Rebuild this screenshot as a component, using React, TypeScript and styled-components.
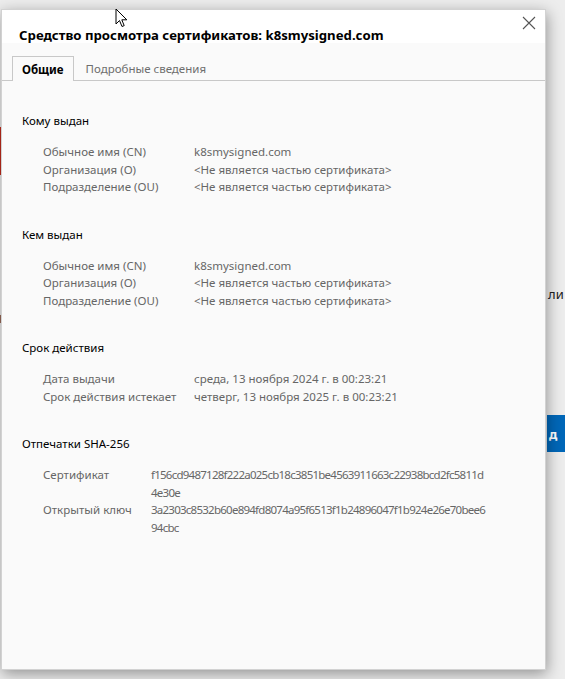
import React from "react";
import styled, { createGlobalStyle } from "styled-components";

const Global = createGlobalStyle`
  html, body { margin: 0; padding: 0; }
  body { background: #ececec; font-family: "Noto Sans", "Open Sans", sans-serif; }
`;

const Page = styled.div`
  position: relative;
  width: 565px;
  height: 679px;
  overflow: hidden;
  background: #ededed;
  padding: 9px 0 0 1px;
  box-sizing: border-box;
`;

const Dialog = styled.div`
  position: relative;
  width: 545px;
  height: 661px;
  box-sizing: border-box;
  border: 1px solid #d2d2d2;
  background: #fafafa;
  box-shadow: 1px 4px 14px rgba(0, 0, 0, 0.38);
  display: flex;
  flex-direction: column;
`;

const TitleBar = styled.div`
  background: #ffffff;
  height: 33px;
  padding: 16px 0 0 17px;
  box-sizing: border-box;
  font-size: 13.2px;
  font-weight: 700;
  color: #000;
`;

const CloseButton = styled.button`
  position: absolute;
  top: 0;
  right: 3px;
  width: 26px;
  height: 26px;
  border: none;
  background: transparent;
  padding: 0;
  display: flex;
  align-items: center;
  justify-content: center;
`;

const Tabs = styled.div`
  display: flex;
  align-items: flex-end;
  margin-top: 13px;
  padding-left: 10px;
  border-bottom: 1px solid #c8c8c8;
  height: 24px;
`;

const Tab = styled.div<{ $active?: boolean }>`
  box-sizing: border-box;
  padding: 0 ${(p) => (p.$active ? "9px" : "10px")} 0 ${(p) => (p.$active ? "9px" : "11px")};
  display: flex;
  align-items: center;
  font-size: 11.5px;
  font-weight: ${(p) => (p.$active ? 700 : 400)};
  color: ${(p) => (p.$active ? "#000" : "#6e6e6e")};
  border: 1px solid ${(p) => (p.$active ? "#c8c8c8" : "transparent")};
  border-bottom: none;
  background: #fafafa;
  margin-bottom: ${(p) => (p.$active ? "-1px" : "0")};
  height: ${(p) => (p.$active ? "25px" : "24px")};
`;

const Content = styled.div`
  padding: 31px 0 0 20px;
  display: flex;
  flex-direction: column;
  gap: 30px;
`;

const Section = styled.section`
  display: flex;
  flex-direction: column;
`;

const SectionTitle = styled.div`
  font-size: 11.5px;
  color: #000;
  line-height: 18px;
  margin-bottom: 13px;
`;

const Rows = styled.div<{ $labelWidth: number }>`
  display: grid;
  grid-template-columns: ${(p) => p.$labelWidth}px 335px;
  padding-left: 21px;
  font-size: 11.5px;
  line-height: 17.5px;
`;

const Label = styled.div`
  color: #666666;
  white-space: nowrap;
`;

const Value = styled.div<{ $hash?: boolean }>`
  color: #666666;
  word-break: break-all;
  letter-spacing: ${(p) => (p.$hash ? "-0.75px" : "0")};
`;

const BackdropText = styled.div`
  position: absolute;
  left: 548px;
  top: 285px;
  font-size: 13px;
  color: #222;
`;

const BackdropButton = styled.div`
  position: absolute;
  left: 547px;
  top: 415px;
  width: 30px;
  height: 37px;
  background: #0067b8;
  color: #fff;
  font-size: 13px;
  font-weight: 700;
  display: flex;
  align-items: center;
  padding-left: 2px;
  box-sizing: border-box;
`;

const EdgeMark = styled.div<{ $top: number; $h: number; $c: string }>`
  position: absolute;
  left: 0;
  top: ${(p) => p.$top}px;
  width: 1px;
  height: ${(p) => p.$h}px;
  background: ${(p) => p.$c};
`;

const Cursor = styled.svg`
  position: absolute;
  left: 115px;
  top: 8px;
`;

type Row = { label: string; value: string };

const sections: { title: string; labelWidth: number; hash?: boolean; rows: Row[] }[] = [
  {
    title: "Кому выдан",
    labelWidth: 151,
    rows: [
      { label: "Обычное имя (CN)", value: "k8smysigned.com" },
      { label: "Организация (O)", value: "<Не является частью сертификата>" },
      { label: "Подразделение (OU)", value: "<Не является частью сертификата>" },
    ],
  },
  {
    title: "Кем выдан",
    labelWidth: 151,
    rows: [
      { label: "Обычное имя (CN)", value: "k8smysigned.com" },
      { label: "Организация (O)", value: "<Не является частью сертификата>" },
      { label: "Подразделение (OU)", value: "<Не является частью сертификата>" },
    ],
  },
  {
    title: "Срок действия",
    labelWidth: 151,
    rows: [
      { label: "Дата выдачи", value: "среда, 13 ноября 2024 г. в 00:23:21" },
      { label: "Срок действия истекает", value: "четверг, 13 ноября 2025 г. в 00:23:21" },
    ],
  },
  {
    title: "Отпечатки SHA-256",
    labelWidth: 108,
    hash: true,
    rows: [
      {
        label: "Сертификат",
        value: "f156cd9487128f222a025cb18c3851be4563911663c22938bcd2fc5811d4e30e",
      },
      {
        label: "Открытый ключ",
        value: "3a2303c8532b60e894fd8074a95f6513f1b24896047f1b924e26e70bee694cbc",
      },
    ],
  },
];

export default function App() {
  return (
    <>
      <Global />
      <Page>
        <EdgeMark $top={127} $h={48} $c="#c42b1c" />
        <EdgeMark $top={315} $h={8} $c="#9a6b5a" />
        <BackdropText>ли</BackdropText>
        <BackdropButton>д</BackdropButton>
        <Dialog>
          <TitleBar>Средство просмотра сертификатов: k8smysigned.com</TitleBar>
          <CloseButton aria-label="Закрыть">
            <svg width="14" height="14" viewBox="0 0 14 14">
              <path d="M1 1L13 13M13 1L1 13" stroke="#555" strokeWidth="1.1" />
            </svg>
          </CloseButton>
          <Tabs>
            <Tab $active>Общие</Tab>
            <Tab>Подробные сведения</Tab>
          </Tabs>
          <Content>
            {sections.map((s) => (
              <Section key={s.title}>
                <SectionTitle>{s.title}</SectionTitle>
                <Rows $labelWidth={s.labelWidth}>
                  {s.rows.map((r) => (
                    <React.Fragment key={r.label}>
                      <Label>{r.label}</Label>
                      <Value $hash={s.hash}>{r.value}</Value>
                    </React.Fragment>
                  ))}
                </Rows>
              </Section>
            ))}
          </Content>
        </Dialog>
        <Cursor width="14" height="21" viewBox="0 0 14 21">
          <path
            d="M1 1 L1 16 L4.5 12.5 L7 18.5 L9.2 17.6 L6.8 11.8 L11.8 11.8 Z"
            fill="#fff"
            stroke="#000"
            strokeWidth="1"
            strokeLinejoin="round"
          />
        </Cursor>
      </Page>
    </>
  );
}
